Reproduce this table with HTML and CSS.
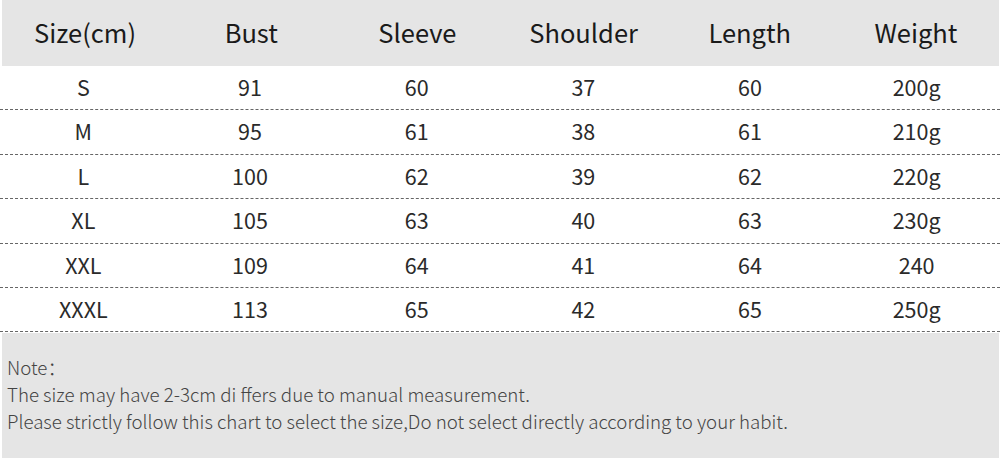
FILE: index.html
```html
<!DOCTYPE html>
<html>
<head>
<meta charset="utf-8">
<link rel="stylesheet" href="styles.css">
</head>
<body>
<div class="chart">
  <div class="row head">
    <div>Size(cm)</div><div>Bust</div><div>Sleeve</div><div>Shoulder</div><div>Length</div><div>Weight</div>
  </div>
  <div class="row"><div>S</div><div>91</div><div>60</div><div>37</div><div>60</div><div>200g</div></div>
  <div class="row"><div>M</div><div>95</div><div>61</div><div>38</div><div>61</div><div>210g</div></div>
  <div class="row"><div>L</div><div>100</div><div>62</div><div>39</div><div>62</div><div>220g</div></div>
  <div class="row"><div>XL</div><div>105</div><div>63</div><div>40</div><div>63</div><div>230g</div></div>
  <div class="row"><div>XXL</div><div>109</div><div>64</div><div>41</div><div>64</div><div>240</div></div>
  <div class="row"><div>XXXL</div><div>113</div><div>65</div><div>42</div><div>65</div><div>250g</div></div>
  <div class="note">
    <p>Note：</p>
    <p>The size may have 2-3cm di ffers due to manual measurement.</p>
    <p>Please strictly follow this chart to select the size,Do not select directly according to your habit.</p>
  </div>
</div>
</body>
</html>
```

FILE: styles.css
```css
html, body {
  margin: 0;
  padding: 0;
  background: #ffffff;
}
.chart {
  width: 1000px;
  height: 460px;
  font-family: "Noto Sans CJK SC", "Noto Sans", sans-serif;
  color: #222;
}
.row {
  display: grid;
  grid-template-columns: repeat(6, 1fr);
  align-items: center;
  text-align: center;
  height: 44.4px;
  box-sizing: border-box;
  padding-bottom: 2px;
  border-bottom: 1px dashed #666;
  font-size: 21.5px;
  line-height: 1;
  color: #2a2a2a;
}
.row.head {
  height: 66px;
  margin: 0 1px 0 2px;
  padding-bottom: 2px;
  background: #e5e5e5;
  border-bottom: none;
  font-size: 25.5px;
  color: #1a1a1a;
}
.note {
  margin: 1px 1px 0 2px;
  height: 125px;
  background: #e5e5e5;
  box-sizing: border-box;
  padding: 20px 0 0 5px;
  font-size: 18.7px;
  font-weight: 300;
  line-height: 27px;
  color: #444;
}
.note p {
  margin: 0;
}
```
